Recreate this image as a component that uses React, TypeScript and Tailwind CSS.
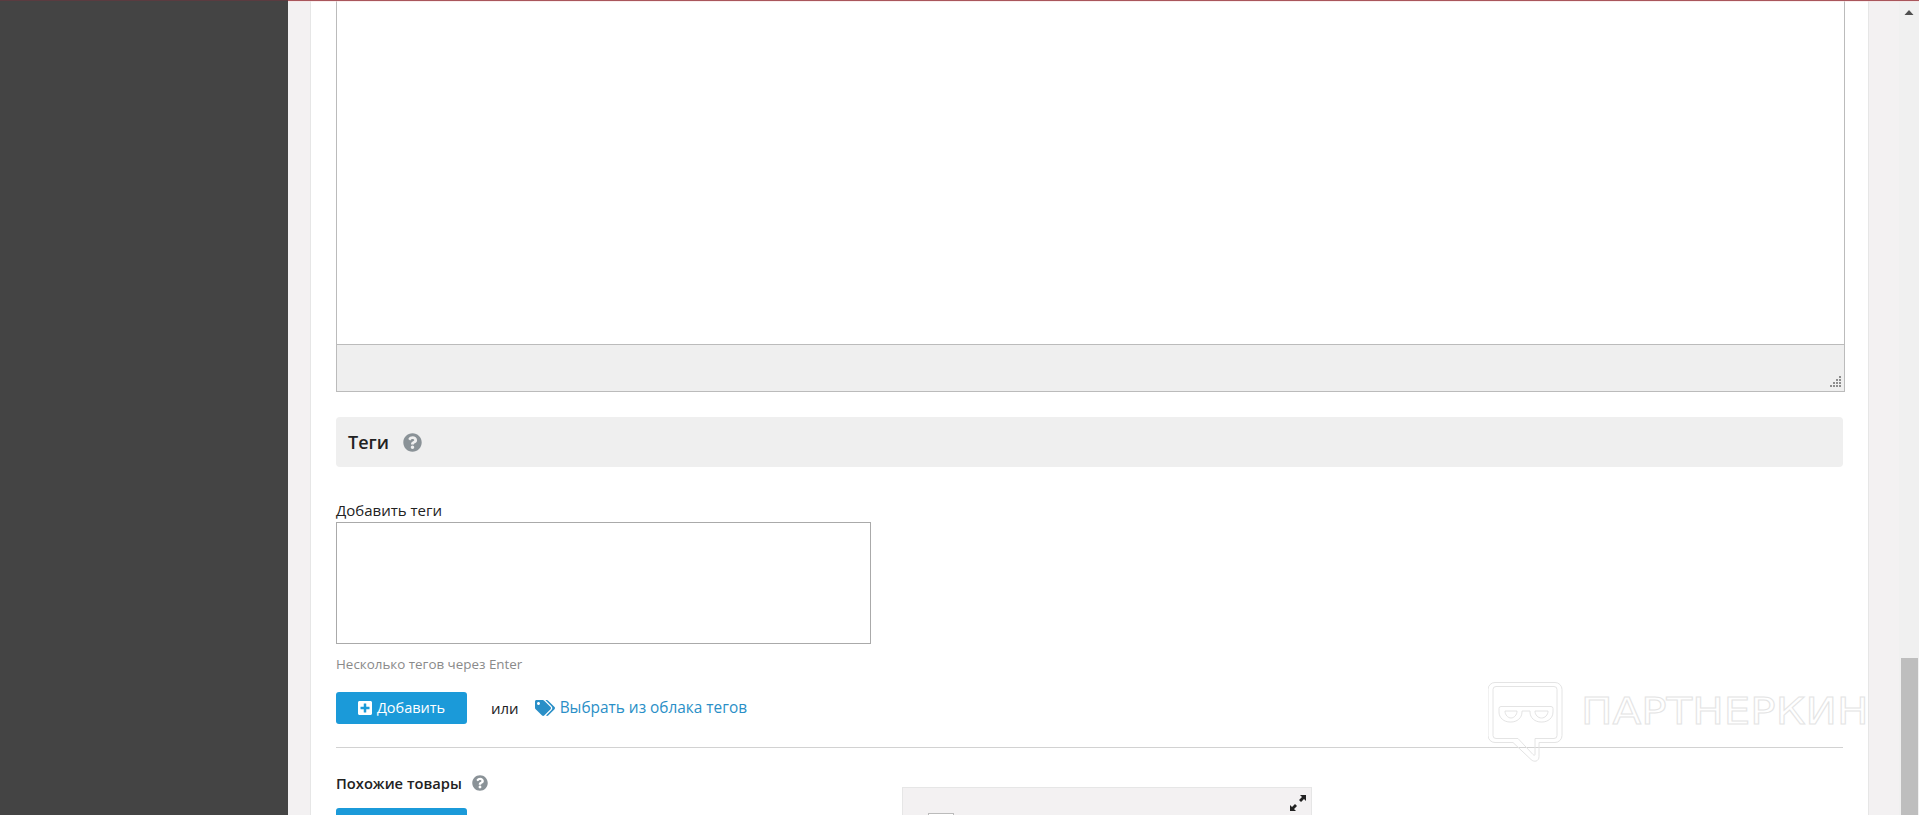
import { FaPlusSquare, FaQuestionCircle, FaTags } from "react-icons/fa";

function Watermark() {
  return (
    <div className="absolute left-[1488px] top-[682px] flex gap-[18px] pointer-events-none">
      <svg width="75" height="81" viewBox="0 0 75 81" fill="none" stroke="#e4e4e4" strokeWidth="1">
        <path d="M7 .5h60a7 7 0 0 1 7 7v46a7 7 0 0 1-7 7H51v14c0 5-5 6-8 3L25 60.500H7a7 7 0 0 1-7-7v-46a7 7 0 0 1 7-7z" />
        <path d="M8 4.500h58a3 3 0 0 1 3 3v46a3 3 0 0 1-3 3H47v16c0 1-1 1-2 0L30 56.500H8a3 3 0 0 1-3-3v-46a3 3 0 0 1 3-3z" />
        <path d="M13 24.500H63a2 2 0 0 1 2 2V30C65 36 60 40 54 40H53C47 40 42 36 42 30V29H34V30C34 36 29 40 23 40H22C16 40 11 36 11 30V26.500a2 2 0 0 1 2-2z" />
        <path d="M17 29H29C29 33 26 36 23 36C20 36 17 33 17 29zM47 29H60C60 33 57 36 53.500 36C50 36 47 33 47 29z" />
      </svg>
      <span className="font-['DejaVu_Sans',sans-serif] text-[38px] leading-none mt-[10px] origin-left scale-x-[1.105] text-transparent [-webkit-text-stroke:1px_#e4e4e4]">
        ПАРТНЕРКИН
      </span>
    </div>
  );
}

export default function App() {
  return (
    <div className="relative flex h-[815px] overflow-hidden bg-[#f3f1f2] font-['Open_Sans',sans-serif] text-[#222]">
      <div className="absolute left-[288px] right-0 top-0 h-px bg-[#a9565c]" />
      <div className="absolute left-[288px] right-0 top-px h-px bg-[#f5dede]/50" />

      {/* Sidebar */}
      <div className="w-[288px] shrink-0 border-t border-[#5b3b40] bg-[#444444]" />

      {/* Main column */}
      <div className="ml-[22px] w-[1559px] shrink-0 border-x border-[#e6e6e6] bg-white pl-[25px] pr-[25px]">
        {/* Editor */}
        <div className="mr-[-2px] h-[392px] border-x border-b border-[#bbbbbb]">
          <div className="h-[345px] border-b border-[#bbbbbb] bg-white" />
          <div className="relative h-[46px] bg-[#efefef]">
            <svg width="12" height="12" viewBox="0 0 12 12" className="absolute bottom-[3px] right-[3px]" fill="#8d8d8d">
              <rect x="10" y="0" width="2" height="2" />
              <rect x="7" y="3" width="2" height="2" />
              <rect x="10" y="3" width="2" height="2" />
              <rect x="4" y="6" width="2" height="2" />
              <rect x="7" y="6" width="2" height="2" />
              <rect x="10" y="6" width="2" height="2" />
              <rect x="1" y="9" width="2" height="2" />
              <rect x="4" y="9" width="2" height="2" />
              <rect x="7" y="9" width="2" height="2" />
              <rect x="10" y="9" width="2" height="2" />
            </svg>
          </div>
        </div>

        {/* Tags */}
        <div className="mt-[25px] flex h-[50px] items-center rounded bg-[#efefef] pl-3">
          <h2 className="text-[18px] font-semibold leading-none">Теги</h2>
          <FaQuestionCircle className="ml-[14px] h-[19px] w-[19px] text-[#8a9297]" />
        </div>

        <label className="mt-[32px] block pb-px text-[15px] leading-[22px]">Добавить теги</label>
        <div className="h-[122px] w-[535px] border border-[#aaaaaa] bg-white" />
        <p className="mt-[11px] text-[13.4px] leading-[18px] text-[#8a8a8a]">Несколько тегов через Enter</p>

        <div className="mt-[19px] flex h-[32px] items-center">
          <button className="flex h-[32px] w-[131px] items-center justify-center gap-[5px] rounded-[3px] bg-[#1b9ad9] text-[14.5px] text-white">
            <FaPlusSquare className="h-[16px] w-[14px]" />
            Добавить
          </button>
          <span className="ml-[24px] text-[15px]">или</span>
          <a className="ml-[16px] flex items-center gap-[5px] text-[15.4px] text-[#2a8fc7]">
            <FaTags className="h-[18px] w-[20px]" />
            Выбрать из облака тегов
          </a>
        </div>

        <div className="mt-[23px] border-t border-[#d2d2d2]" />

        {/* Similar products */}
        <div className="relative flex">
          <div className="w-[566px] shrink-0">
            <div className="mt-[25px] flex items-center gap-[10px]">
              <span className="text-[14.7px] font-semibold leading-[20px]">Похожие товары</span>
              <FaQuestionCircle className="h-[16px] w-[16px] text-[#8a9297]" />
            </div>
            <div className="mt-[15px] h-[32px] w-[131px] rounded-[3px] bg-[#1b9ad9]" />
          </div>
          <div className="relative mt-[39px] h-[60px] w-[410px] border border-[#e6e6e6] bg-[#f3f1f2]">
            <svg width="16" height="16" viewBox="0 0 16 16" className="absolute right-[5px] top-[7px]" fill="#222">
              <path d="M10 0h6v6l-2-2-3 3-2-2 3-3zM0 16v-6l2 2 3-3 2 2-3 3 2 2z" />
            </svg>
            <div className="ml-[25px] mt-[25px] h-[20px] w-[26px] border border-[#bbbbbb] bg-white" />
          </div>
        </div>
      </div>

      {/* Scrollbar */}
      <div className="ml-auto flex w-[20px] shrink-0 flex-col bg-[#f0f0f0] pl-[2px] pr-px">
        <svg width="17" height="17" viewBox="0 0 17 17" className="shrink-0">
          <path d="M3.500 15 L8 10 L12.500 15 Z" fill="#505050" />
        </svg>
        <div className="mt-[641px] flex-1 bg-[#bebebe]" />
      </div>

      <Watermark />
    </div>
  );
}
